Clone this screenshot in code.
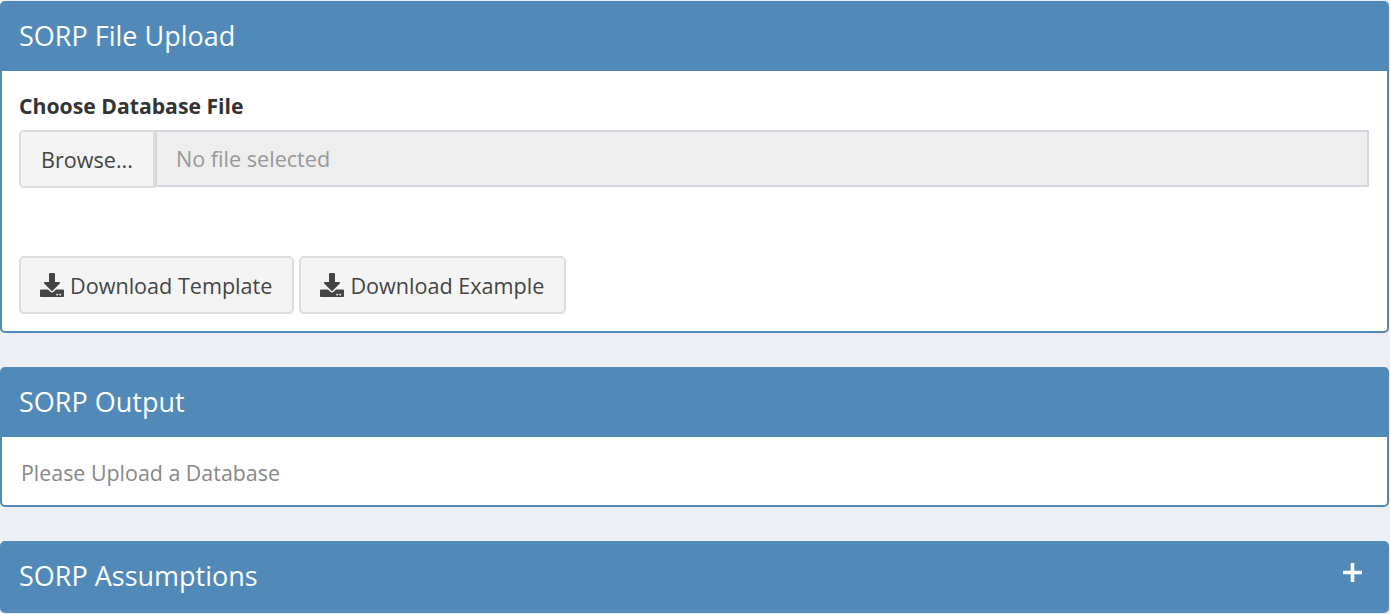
<script>
</script>

<div class="page">
  <section class="box">
    <header class="head"><h3>SORP File Upload</h3></header>
    <div class="body">
      <label class="lab" for="f">Choose Database File</label>
      <div class="group">
        <span class="btn browse">Browse...</span>
        <input id="f" class="name" type="text" placeholder="No file selected" readonly />
      </div>
      <div class="actions">
        <a class="btn dl" href="#t"><svg viewBox="0 0 512 512" width="24" height="24"><path d="M216 0h80c13.300 0 24 10.700 24 24v168h87.700c17.800 0 26.700 21.500 14.100 34.100L269.700 378.300c-7.500 7.500-19.800 7.500-27.300 0L90.100 226.100c-12.600-12.600-3.700-34.100 14.100-34.100H192V24c0-13.300 10.700-24 24-24zm296 376v112c0 13.300-10.700 24-24 24H24c-13.300 0-24-10.700-24-24V376c0-13.300 10.700-24 24-24h146.700l49 49c20.100 20.100 52.500 20.100 72.600 0l49-49H488c13.300 0 24 10.700 24 24zm-124 88c0-11-9-20-20-20s-20 9-20 20 9 20 20 20 20-9 20-20zm64 0c0-11-9-20-20-20s-20 9-20 20 9 20 20 20 20-9 20-20z"/></svg>Download Template</a>
        <a class="btn dl" href="#e"><svg viewBox="0 0 512 512" width="24" height="24"><path d="M216 0h80c13.300 0 24 10.700 24 24v168h87.700c17.800 0 26.700 21.500 14.100 34.100L269.700 378.300c-7.500 7.500-19.800 7.500-27.300 0L90.100 226.100c-12.600-12.600-3.700-34.100 14.100-34.100H192V24c0-13.300 10.700-24 24-24zm296 376v112c0 13.300-10.700 24-24 24H24c-13.300 0-24-10.700-24-24V376c0-13.300 10.700-24 24-24h146.700l49 49c20.100 20.100 52.500 20.100 72.600 0l49-49H488c13.300 0 24 10.700 24 24zm-124 88c0-11-9-20-20-20s-20 9-20 20 9 20 20 20 20-9 20-20zm64 0c0-11-9-20-20-20s-20 9-20 20 9 20 20 20 20-9 20-20z"/></svg>Download Example</a>
      </div>
    </div>
  </section>

  <section class="box">
    <header class="head"><h3>SORP Output</h3></header>
    <div class="body out">Please Upload a Database</div>
  </section>

  <section class="box last">
    <header class="head">
      <h3>SORP Assumptions</h3>
      <svg class="plus" viewBox="0 0 19 19" width="19" height="19"><path d="M7.700 0h3.600v7.700H19v3.600h-7.700V19H7.700v-7.700H0V7.700h7.700z"/></svg>
    </header>
  </section>
</div>

<style>
  :global(body) {
    margin: 0;
    background: #ecf0f5;
    font-family: "Open Sans", sans-serif;
  }
  .page {
    display: flex;
    flex-direction: column;
    gap: 34px;
    height: 614px;
    box-sizing: border-box;
    padding: 1px 1px 0 0;
    overflow: hidden;
  }
  .box {
    background: #fff;
    border: 2px solid #518ab9;
    border-radius: 5px;
    box-sizing: border-box;
    flex: none;
  }
  .head {
    box-sizing: border-box;
    background: #518ab9;
    color: #fff;
    height: 68px;
    padding: 0 17px 4px;
    display: flex;
    align-items: center;
    justify-content: space-between;
  }
  h3 {
    margin: 0;
    font-size: 27px;
    font-weight: 400;
  }
  .plus {
    fill: #fff;
    align-self: flex-start;
    margin: 20px 8px 0 0;
  }
  .body {
    padding: 20px 18px 17px 17px;
    color: #333;
  }
  .lab {
    display: block;
    font-weight: 700;
    font-size: 21.2px;
    line-height: 30px;
    margin-bottom: 9px;
  }
  .group { display: flex; height: 58px; }
  .btn {
    box-sizing: border-box;
    background: #f4f4f4;
    border: 2px solid #ddd;
    color: #444;
    font-size: 21.6px;
    text-decoration: none;
    display: flex;
    align-items: center;
  }
  .browse {
    width: 136px;
    justify-content: center;
    border-radius: 5px 0 0 5px;
  }
  .name {
    flex: 1;
    min-width: 0;
    box-sizing: border-box;
    height: 57px;
    border: 2px solid #d2d6de;
    background: #eee;
    padding: 0 19px;
    font: 21.6px "Open Sans", sans-serif;
    outline: none;
  }
  .name::placeholder { color: #999; opacity: 1; }
  .actions { display: flex; gap: 5px; margin-top: 68px; }
  .dl {
    height: 58px;
    padding: 0 20px 0 19px;
    gap: 6px;
    border-radius: 5px;
  }
  .dl svg { fill: #444; flex: none; }
  .out {
    color: #888;
    font-size: 21.4px;
    line-height: 30px;
    padding: 21px 19px 17px;
  }
</style>
